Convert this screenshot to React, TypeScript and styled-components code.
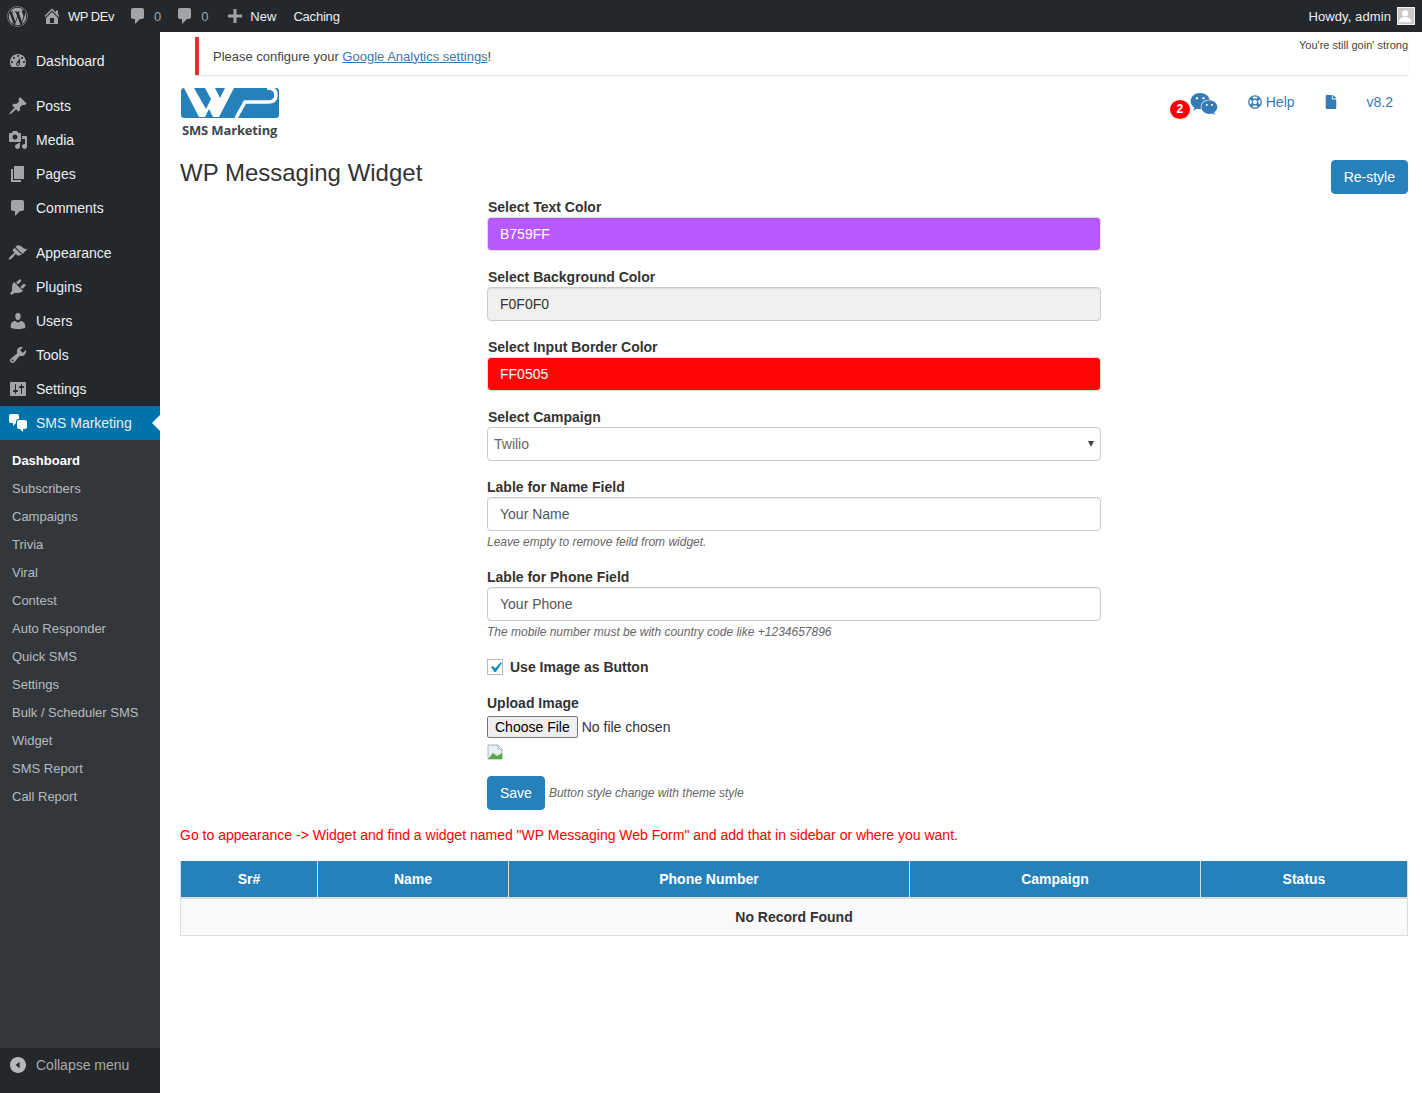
import { createGlobalStyle, styled } from 'styled-components';
import { FaWordpress, FaWeixin, FaRegLifeRing, FaFile } from 'react-icons/fa';

const GlobalStyle = createGlobalStyle`
  html, body { margin: 0; padding: 0; background: #fff; }
  body { font-family: "Liberation Sans", Arial, sans-serif; font-size: 14px; color: #333; }
  * { box-sizing: border-box; }
`;

const Page = styled.div`
  width: 1422px;
  height: 1093px;
  display: flex;
  flex-direction: column;
  overflow: hidden;
`;
const TopBar = styled.header`
  height: 32px;
  flex: none;
  background: #23282d;
  color: #eee;
  font-size: 13px;
  display: flex;
  align-items: center;
`;
const BarItem = styled.div<{ $pl?: number; $pr?: number; $gap?: number }>`
  display: flex;
  align-items: center;
  height: 32px;
  padding: 0 ${(p) => p.$pr ?? 7}px 0 ${(p) => p.$pl ?? 7}px;
  gap: ${(p) => p.$gap ?? 6}px;
`;
const SiteName = styled.span`
  letter-spacing: -0.5px;
`;
const CachingLabel = styled.span`
  letter-spacing: -0.2px;
`;
const Howdy = styled.span`
  letter-spacing: 0.1px;
`;
const BarIcon = styled.svg`
  width: 20px;
  height: 20px;
  fill: #a0a5aa;
  flex: none;
`;
const BarCount = styled.span`
  color: #a0a5aa;
`;
const BarSpacer = styled.div`
  flex: 1;
`;
const AvatarBox = styled.div`
  width: 18px;
  height: 18px;
  background: #c9c9c9;
  border: 1px solid #eee;
  overflow: hidden;
`;
const Body = styled.div`
  flex: 1;
  display: flex;
  min-height: 0;
`;
const Sidebar = styled.nav`
  width: 160px;
  flex: none;
  background: #23282d;
  display: flex;
  flex-direction: column;
`;
const MenuGroup = styled.div<{ $top: number }>`
  margin-top: ${(p) => p.$top}px;
`;
const MenuItem = styled.div<{ $active?: boolean }>`
  position: relative;
  height: 34px;
  display: flex;
  align-items: center;
  font-size: 14px;
  color: #eee;
  background: ${(p) => (p.$active ? '#0073aa' : 'transparent')};
  padding-left: 8px;
  gap: 8px;
  ${(p) =>
    p.$active &&
    `&::after {
      content: '';
      position: absolute;
      right: 0;
      top: 50%;
      margin-top: -8px;
      border: 8px solid transparent;
      border-right-color: #fff;
      border-left-width: 0;
    }`}
`;
const MenuIcon = styled.svg<{ $active?: boolean }>`
  width: 20px;
  height: 20px;
  flex: none;
  fill: ${(p) => (p.$active ? '#fff' : '#a0a5aa')};
`;
const SubMenu = styled.div`
  flex: 1;
  background: #32373c;
  padding-top: 6px;
`;
const SubItem = styled.div<{ $current?: boolean }>`
  height: 28px;
  padding-left: 12px;
  display: flex;
  align-items: center;
  font-size: 13px;
  color: ${(p) => (p.$current ? '#fff' : 'rgba(240,245,250,0.7)')};
  font-weight: ${(p) => (p.$current ? 700 : 400)};
`;
const Collapse = styled.div`
  height: 45px;
  flex: none;
  display: flex;
  align-items: flex-start;
  gap: 10px;
  padding: 9px 0 0 10px;
  color: #aaa;
  font-size: 14px;
  line-height: 16px;
`;
const CollapseIcon = styled.svg`
  width: 16px;
  height: 16px;
  flex: none;
  fill: #b4b9be;
`;
const Main = styled.main`
  flex: 1;
  min-width: 0;
  padding: 5px 14px 0 20px;
  position: relative;
`;
const Notice = styled.div`
  margin-left: 15px;
  height: 38px;
  background: #fff;
  border-left: 4px solid #dc3232;
  box-shadow: 0 1px 1px 0 rgba(0, 0, 0, 0.1);
  padding: 0 0 0 14px;
  display: flex;
  align-items: center;
  color: #444;
  font-size: 13px;
  a {
    color: #337ab7;
    text-decoration: underline;
  }
`;
const Dolly = styled.p`
  position: absolute;
  right: 14px;
  top: 7px;
  margin: 0;
  font-size: 11px;
  line-height: 13px;
  color: #444;
`;
const BrandRow = styled.div`
  display: flex;
  justify-content: space-between;
  align-items: flex-start;
  margin-top: 13px;
  height: 72px;
`;
const Brand = styled.div`
  width: 100px;
  padding-left: 1px;
`;
const LogoMark = styled.svg`
  display: block;
  width: 98px;
  height: 30px;
`;
const BrandName = styled.div`
  font-family: "Open Sans", "Liberation Sans", sans-serif;
  font-size: 13px;
  font-weight: 700;
  line-height: 16px;
  margin-top: 4px;
  padding-left: 1px;
  letter-spacing: -0.15px;
  color: #3d4650;
  white-space: nowrap;
`;
const ToolLinks = styled.div`
  display: flex;
  align-items: center;
  color: #337ab7;
  padding: 2px 15px 0 0;
`;
const ChatWrap = styled.div`
  position: relative;
  width: 28px;
  height: 26px;
  margin-right: 30px;
  font-size: 28px;
  line-height: 0;
  color: #337ab7;
`;
const Badge = styled.span`
  position: absolute;
  left: -20px;
  top: 10px;
  width: 20px;
  height: 19px;
  border-radius: 50%;
  background: #f00;
  color: #fff;
  font-size: 12px;
  font-weight: 700;
  line-height: 19px;
  text-align: center;
`;
const ToolLink = styled.span<{ $mr: number }>`
  display: flex;
  align-items: center;
  gap: 4px;
  margin-top: -2px;
  margin-right: ${(p) => p.$mr}px;
  font-size: 14px;
`;
const TitleRow = styled.div`
  display: flex;
  justify-content: space-between;
  align-items: flex-start;
  height: 37px;
`;
const Title = styled.h1`
  margin: -1px 0 0;
  font-size: 24px;
  font-weight: 400;
  line-height: 28px;
  color: #333;
`;
const Btn = styled.button`
  background: #2681bb;
  border: 1px solid #2681bb;
  color: #fff;
  border-radius: 4px;
  height: 34px;
  padding: 0 12px;
  font: 14px "Liberation Sans", Arial, sans-serif;
`;
const Form = styled.form`
  width: 614px;
  margin-left: 307px;
`;
const Group = styled.div`
  margin-bottom: 16px;
`;
const Label = styled.label<{ $inset?: boolean }>`
  display: block;
  font-weight: 700;
  font-size: 14px;
  line-height: 20px;
  color: #333;
  padding-left: ${(p) => (p.$inset ? 1 : 0)}px;
`;
const Field = styled.input<{ $bg?: string; $fg?: string }>`
  display: block;
  width: 100%;
  height: 34px;
  padding: 0 12px;
  border: 1px solid ${(p) => (p.$fg === '#fff' ? '#ddd' : '#ccc')};
  border-radius: 4px;
  background: ${(p) => p.$bg ?? '#fff'};
  color: ${(p) => p.$fg ?? '#555'};
  font: 14px "Liberation Sans", Arial, sans-serif;
  box-shadow: inset 0 1px 1px rgba(0, 0, 0, 0.075);
`;
const SelectBox = styled.div`
  position: relative;
  height: 34px;
  border: 1px solid #ccc;
  border-radius: 4px;
  background: #fff;
  color: #666;
  padding: 0 6px;
  display: flex;
  align-items: center;
  justify-content: space-between;
  font-size: 14px;
`;
const Caret = styled.span`
  width: 0;
  height: 0;
  border-left: 3px solid transparent;
  border-right: 3px solid transparent;
  border-top: 6px solid #444;
`;
const Help = styled.p`
  margin: 3px 0 0;
  font-size: 12px;
  line-height: 17px;
  font-style: italic;
  color: #666;
`;
const CheckRow = styled.div`
  display: flex;
  align-items: center;
  gap: 7px;
  height: 20px;
  margin-bottom: 16px;
  font-weight: 700;
`;
const CheckBox = styled.span`
  width: 16px;
  height: 16px;
  border: 1px solid #b4b9be;
  background: #fff;
  display: flex;
  align-items: center;
  justify-content: center;
`;
const CheckGlyph = styled.svg`
  width: 21px;
  height: 21px;
  flex: none;
  fill: #1e8cbe;
`;
const FileInput = styled.input`
  display: block;
  font: 14px "Liberation Sans", Arial, sans-serif;
  color: #333;
  height: 22px;
  margin-top: 3px;
  &::file-selector-button {
    font: 14px "Liberation Sans", Arial, sans-serif;
    height: 22px;
    padding: 0 7px;
    background: #efefef;
    border: 1px solid #767676;
    border-radius: 2px;
    margin-right: 4px;
  }
`;
const BrokenImage = styled.svg`
  display: block;
  width: 16px;
  height: 16px;
  margin-top: 6px;
`;
const SaveRow = styled.div`
  display: flex;
  align-items: center;
  gap: 4px;
  margin-top: 16px;
`;
const SaveNote = styled.span`
  font-size: 12px;
  font-style: italic;
  color: #666;
`;
const RedNote = styled.p`
  margin: 16px 0 17px;
  line-height: 18px;
  color: #f00;
  font-size: 14px;
`;
const Table = styled.table`
  width: 1227px;
  border-collapse: collapse;
  table-layout: fixed;
`;
const Th = styled.th<{ $w: number }>`
  width: ${(p) => p.$w}px;
  height: 37px;
  background: #2681bb;
  color: #fff;
  font-size: 14px;
  font-weight: 700;
  border: 1px solid #ddd;
  border-bottom: 2px solid #ddd;
  border-top: 0;
  padding: 0;
`;
const Td = styled.td`
  height: 37px;
  background: #f9f9f9;
  border: 1px solid #ddd;
  text-align: center;
  font-weight: 700;
  color: #333;
  padding: 0;
`;

const dash = {
  dashboard:
    'M3.76 16h12.48c1.1-1.37 1.76-3.11 1.76-5 0-4.42-3.58-8-8-8s-8 3.58-8 8c0 1.89.66 3.63 1.76 5zM10 4c.55 0 1 .45 1 1s-.45 1-1 1-1-.45-1-1 .45-1 1-1zM6 6c.55 0 1 .45 1 1s-.45 1-1 1-1-.45-1-1 .45-1 1-1zm8 0c.55 0 1 .45 1 1s-.45 1-1 1-1-.45-1-1 .45-1 1-1zm-5.37 5.55L12 7v6c0 1.1-.9 2-2 2s-2-.9-2-2c0-.57.24-1.08.63-1.45zM4 10c.55 0 1 .45 1 1s-.45 1-1 1-1-.45-1-1 .45-1 1-1zm12 0c.55 0 1 .45 1 1s-.45 1-1 1-1-.45-1-1 .45-1 1-1zm-5 3c0-.55-.45-1-1-1s-1 .45-1 1 .45 1 1 1 1-.45 1-1z',
  post:
    'M10.44 3.02l1.82-1.82 6.36 6.35-1.83 1.82c-1.05-.68-2.48-.57-3.41.36l-.75.75c-.92.93-1.04 2.35-.35 3.41l-1.83 1.82-2.41-2.41-2.8 2.79c-.42.42-3.38 2.71-3.8 2.29s1.86-3.39 2.28-3.81l2.79-2.79L4.1 9.36l1.83-1.82c1.05.69 2.48.57 3.4-.36l.75-.75c.93-.92 1.05-2.35.36-3.41z',
  media:
    'M13 11V4c0-.55-.45-1-1-1h-1.67L9 1H5L3.67 3H2c-.55 0-1 .45-1 1v7c0 .55.45 1 1 1h10c.55 0 1-.45 1-1zM7 4.5c1.38 0 2.5 1.12 2.5 2.5S8.38 9.5 7 9.5 4.5 8.38 4.5 7 5.62 4.5 7 4.5zM14 6h5v10.5c0 1.38-1.12 2.5-2.5 2.5S14 17.88 14 16.5s1.12-2.5 2.5-2.5c.17 0 .34.02.5.05V9h-3V6zm-4 8.05V13h2v3.5c0 1.38-1.12 2.5-2.5 2.5S7 17.88 7 16.5 8.12 14 9.5 14c.17 0 .34.02.5.05z',
  page: 'M6 15V2h10v13H6zm-1 1h8v2H3V5h2v11z',
  comment: 'M5 2h9c1.1 0 2 .9 2 2v7c0 1.1-.9 2-2 2h-2l-5 5v-5H5c-1.1 0-2-.9-2-2V4c0-1.1.9-2 2-2z',
  appearance:
    'M14.48 11.06L7.41 3.99l1.5-1.5c.5-.56 2.3-.47 3.51.32 1.21.8 1.43 1.28 2.91 2.1 1.18.64 2.45 1.26 4.45.85zm-.71.71L6.7 4.7 4.93 6.47c-.39.39-.39 1.02 0 1.41l1.06 1.06c.39.39.39 1.03 0 1.42-.6.6-1.43 1.11-2.21 1.69-.35.26-.7.53-1.01.84-1.34 1.34-2.37 2.96-1.75 3.58.62.61 2.24-.42 3.58-1.75.31-.31.58-.66.84-1.01.58-.78 1.09-1.61 1.69-2.21.39-.39 1.02-.39 1.41 0l1.06 1.06c.39.39 1.02.39 1.41 0z',
  plugins:
    'M13.11 4.36L9.87 7.6 8 5.73l3.24-3.24c.35-.34 1.05-.2 1.56.32.52.51.66 1.21.31 1.55zm-8 1.77l.91-1.12 9.01 9.01-1.19.84c-.71.71-2.63 1.16-3.82 1.16H6.14L4.9 17.26c-.59.59-1.54.59-2.12 0-.59-.58-.59-1.53 0-2.12l1.24-1.24v-3.88c0-1.13.4-3.19 1.09-3.89zm7.26 3.97l3.24-3.24c.34-.35 1.04-.21 1.55.31.52.51.66 1.21.31 1.55l-3.24 3.25z',
  users:
    'M10 9.25c-2.27 0-2.73-3.44-2.73-3.44C7 4.02 7.82 2 9.97 2c2.16 0 2.98 2.02 2.71 3.81 0 0-.41 3.44-2.68 3.44zm0 2.57L12.72 10c2.39 0 4.52 2.33 4.52 4.53v2.49s-3.65 1.13-7.24 1.13c-3.65 0-7.24-1.13-7.24-1.13v-2.49c0-2.25 1.94-4.48 4.47-4.48z',
  tools:
    'M16.68 9.77c-1.34 1.34-3.3 1.67-4.95.99l-5.41 6.52c-.99.99-2.59.99-3.58 0s-.99-2.59 0-3.57l6.52-5.42c-.68-1.65-.35-3.61.99-4.95 1.28-1.28 3.12-1.62 4.72-1.06l-2.89 2.89 2.82 2.82 2.86-2.87c.53 1.58.18 3.39-1.08 4.65zM3.81 16.21c.4.39 1.04.39 1.43 0 .4-.4.4-1.04 0-1.43-.39-.4-1.03-.4-1.43 0-.39.39-.39 1.03 0 1.43z',
  settings:
    'M18 16V4c0-.55-.45-1-1-1H3c-.55 0-1 .45-1 1v12c0 .55.45 1 1 1h14c.55 0 1-.45 1-1zM8 11h1c.55 0 1 .45 1 1s-.45 1-1 1H8v1.5c0 .28-.22.5-.5.5s-.5-.22-.5-.5V13H6c-.55 0-1-.45-1-1s.45-1 1-1h1V5.5c0-.28.22-.5.5-.5s.5.22.5.5V11zm5-2h-1c-.55 0-1-.45-1-1s.45-1 1-1h1V5.5c0-.28.22-.5.5-.5s.5.22.5.5V7h1c.55 0 1 .45 1 1s-.45 1-1 1h-1v5.5c0 .28-.22.5-.5.5s-.5-.22-.5-.5V9z',
  chat:
    'M11 6h-.82C9.07 6 8 7.2 8 8.16V10l-3 3v-3H3c-1.1 0-2-.9-2-2V3c0-1.1.9-2 2-2h6c1.1 0 2 .9 2 2v3zm0 1h6c1.1 0 2 .9 2 2v5c0 1.1-.9 2-2 2h-2v3l-3-3h-1c-1.1 0-2-.9-2-2V9c0-1.1.9-2 2-2z',
  home: 'M16 8.5l1.53 1.53-1.06 1.06L10 4.62l-6.47 6.47-1.06-1.06L10 2.5l4 4v-2h2v4zm-6-2.46l6 5.99V18H4v-5.97zM12 17v-5H8v5h4z',
  plus: 'M17 8.5v3h-5.5V17h-3v-5.5H3v-3h5.5V3h3v5.5z',
  collapse: 'M10 20C4.48 20 0 15.52 0 10S4.48 0 10 0s10 4.48 10 10-4.48 10-10 10zm2-14l-5 4 5 4V6z',
};

const groups: { top: number; items: [string, string][] }[] = [
  { top: 12, items: [['Dashboard', dash.dashboard]] },
  {
    top: 11,
    items: [
      ['Posts', dash.post],
      ['Media', dash.media],
      ['Pages', dash.page],
      ['Comments', dash.comment],
    ],
  },
  {
    top: 11,
    items: [
      ['Appearance', dash.appearance],
      ['Plugins', dash.plugins],
      ['Users', dash.users],
      ['Tools', dash.tools],
      ['Settings', dash.settings],
    ],
  },
];

const subItems = [
  'Dashboard',
  'Subscribers',
  'Campaigns',
  'Trivia',
  'Viral',
  'Contest',
  'Auto Responder',
  'Quick SMS',
  'Settings',
  'Bulk / Scheduler SMS',
  'Widget',
  'SMS Report',
  'Call Report',
];

const columns: [string, number][] = [
  ['Sr#', 137],
  ['Name', 191],
  ['Phone Number', 401],
  ['Campaign', 291],
  ['Status', 207],
];

export default function App() {
  return (
    <Page>
      <GlobalStyle />
      <TopBar>
        <BarItem>
          <FaWordpress size={21} color="#a0a5aa" />
        </BarItem>
        <BarItem>
          <BarIcon viewBox="0 0 20 20"><path d={dash.home} /></BarIcon>
          <SiteName>WP DEv</SiteName>
        </BarItem>
        <BarItem>
          <BarIcon viewBox="0 0 20 20"><path d={dash.comment} /></BarIcon>
          <BarCount>0</BarCount>
        </BarItem>
        <BarItem>
          <BarIcon viewBox="0 0 20 20"><path d={dash.comment} /></BarIcon>
          <BarCount>0</BarCount>
        </BarItem>
        <BarItem $pl={10} $pr={17} $gap={5}>
          <BarIcon viewBox="0 0 20 20"><path d={dash.plus} /></BarIcon>
          New
        </BarItem>
        <BarItem $pl={0}><CachingLabel>Caching</CachingLabel></BarItem>
        <BarSpacer />
        <BarItem>
          <Howdy>Howdy, admin</Howdy>
          <AvatarBox>
            <svg viewBox="0 0 18 18" width="16" height="16">
              <circle cx="8" cy="6" r="3.6" fill="#fff" />
              <path d="M1 16c0-4 3-6 7-6s7 2 7 6z" fill="#fff" />
            </svg>
          </AvatarBox>
        </BarItem>
      </TopBar>
      <Body>
        <Sidebar>
          {groups.map((g) => (
            <MenuGroup key={g.items[0][0]} $top={g.top}>
              {g.items.map(([label, d]) => (
                <MenuItem key={label}>
                  <MenuIcon viewBox="0 0 20 20"><path d={d} /></MenuIcon>
                  {label}
                </MenuItem>
              ))}
            </MenuGroup>
          ))}
          <MenuItem $active>
            <MenuIcon $active viewBox="0 0 20 20"><path d={dash.chat} /></MenuIcon>
            SMS Marketing
          </MenuItem>
          <SubMenu>
            {subItems.map((s, i) => (
              <SubItem key={s} $current={i === 0}>{s}</SubItem>
            ))}
          </SubMenu>
          <Collapse>
            <CollapseIcon viewBox="0 0 20 20"><path d={dash.collapse} /></CollapseIcon>
            Collapse menu
          </Collapse>
        </Sidebar>
        <Main>
          <Notice>
            <span>
              Please configure your <a href="#ga">Google Analytics settings</a>!
            </span>
          </Notice>
          <Dolly>You&apos;re still goin&apos; strong</Dolly>
          <BrandRow>
            <Brand>
              <LogoMark viewBox="0 0 98 30">
                <rect width="98" height="30" fill="#2681bb" rx="3" />
                <path
                  fill="#fff"
                  d="M3 0H13L25 21 30 11 24 0H34L39 10 44 0H53L38 29H32L28 21 24 29H18Z"
                />
                <path
                  fill="none"
                  stroke="#fff"
                  strokeWidth="3.5"
                  d="M86 0C93 0 95 3 95 7 95 12 92 14 87 14H64L55 30"
                />
              </LogoMark>
              <BrandName>SMS Marketing</BrandName>
            </Brand>
            <ToolLinks>
              <ChatWrap>
                <FaWeixin />
                <Badge>2</Badge>
              </ChatWrap>
              <ToolLink $mr={29}>
                <FaRegLifeRing size={14} />
                Help
              </ToolLink>
              <ToolLink $mr={29}>
                <FaFile size={14} />
              </ToolLink>
              <ToolLink $mr={0}>v8.2</ToolLink>
            </ToolLinks>
          </BrandRow>
          <TitleRow>
            <Title>WP Messaging Widget</Title>
            <Btn type="button">Re-style</Btn>
          </TitleRow>
          <Form>
            <Group>
              <Label $inset>Select Text Color</Label>
              <Field readOnly value="B759FF" $bg="#b759ff" $fg="#fff" />
            </Group>
            <Group>
              <Label $inset>Select Background Color</Label>
              <Field readOnly value="F0F0F0" $bg="#f0f0f0" $fg="#333" />
            </Group>
            <Group>
              <Label $inset>Select Input Border Color</Label>
              <Field readOnly value="FF0505" $bg="#ff0505" $fg="#fff" />
            </Group>
            <Group>
              <Label $inset>Select Campaign</Label>
              <SelectBox>
                Twilio
                <Caret />
              </SelectBox>
            </Group>
            <Group>
              <Label>Lable for Name Field</Label>
              <Field readOnly value="Your Name" />
              <Help>Leave empty to remove feild from widget.</Help>
            </Group>
            <Group>
              <Label>Lable for Phone Field</Label>
              <Field readOnly value="Your Phone" />
              <Help>The mobile number must be with country code like +1234657896</Help>
            </Group>
            <CheckRow>
              <CheckBox>
                <CheckGlyph viewBox="0 0 20 20">
                  <path d="M14.83 4.89l1.34.94-5.81 8.38H9.02L5.78 9.67l1.34-1.25 2.57 2.4z" />
                </CheckGlyph>
              </CheckBox>
              Use Image as Button
            </CheckRow>
            <Label>Upload Image</Label>
            <FileInput type="file" />
            <BrokenImage viewBox="0 0 16 16">
              <path d="M1 1h10l4 4v10H1z" fill="#e8eef5" stroke="#a9b4c0" strokeWidth="1" />
              <path d="M1 15l5-6 4 3 5-3v6z" fill="#5aa845" />
              <path d="M11 1l4 4h-4z" fill="#fff" stroke="#a9b4c0" />
            </BrokenImage>
            <SaveRow>
              <Btn type="button">Save</Btn>
              <SaveNote>Button style change with theme style</SaveNote>
            </SaveRow>
          </Form>
          <RedNote>
            Go to appearance -&gt; Widget and find a widget named &quot;WP Messaging Web Form&quot; and add that in sidebar or where you want.
          </RedNote>
          <Table>
            <thead>
              <tr>
                {columns.map(([name, w]) => (
                  <Th key={name} $w={w}>{name}</Th>
                ))}
              </tr>
            </thead>
            <tbody>
              <tr>
                <Td colSpan={5}>No Record Found</Td>
              </tr>
            </tbody>
          </Table>
        </Main>
      </Body>
    </Page>
  );
}
